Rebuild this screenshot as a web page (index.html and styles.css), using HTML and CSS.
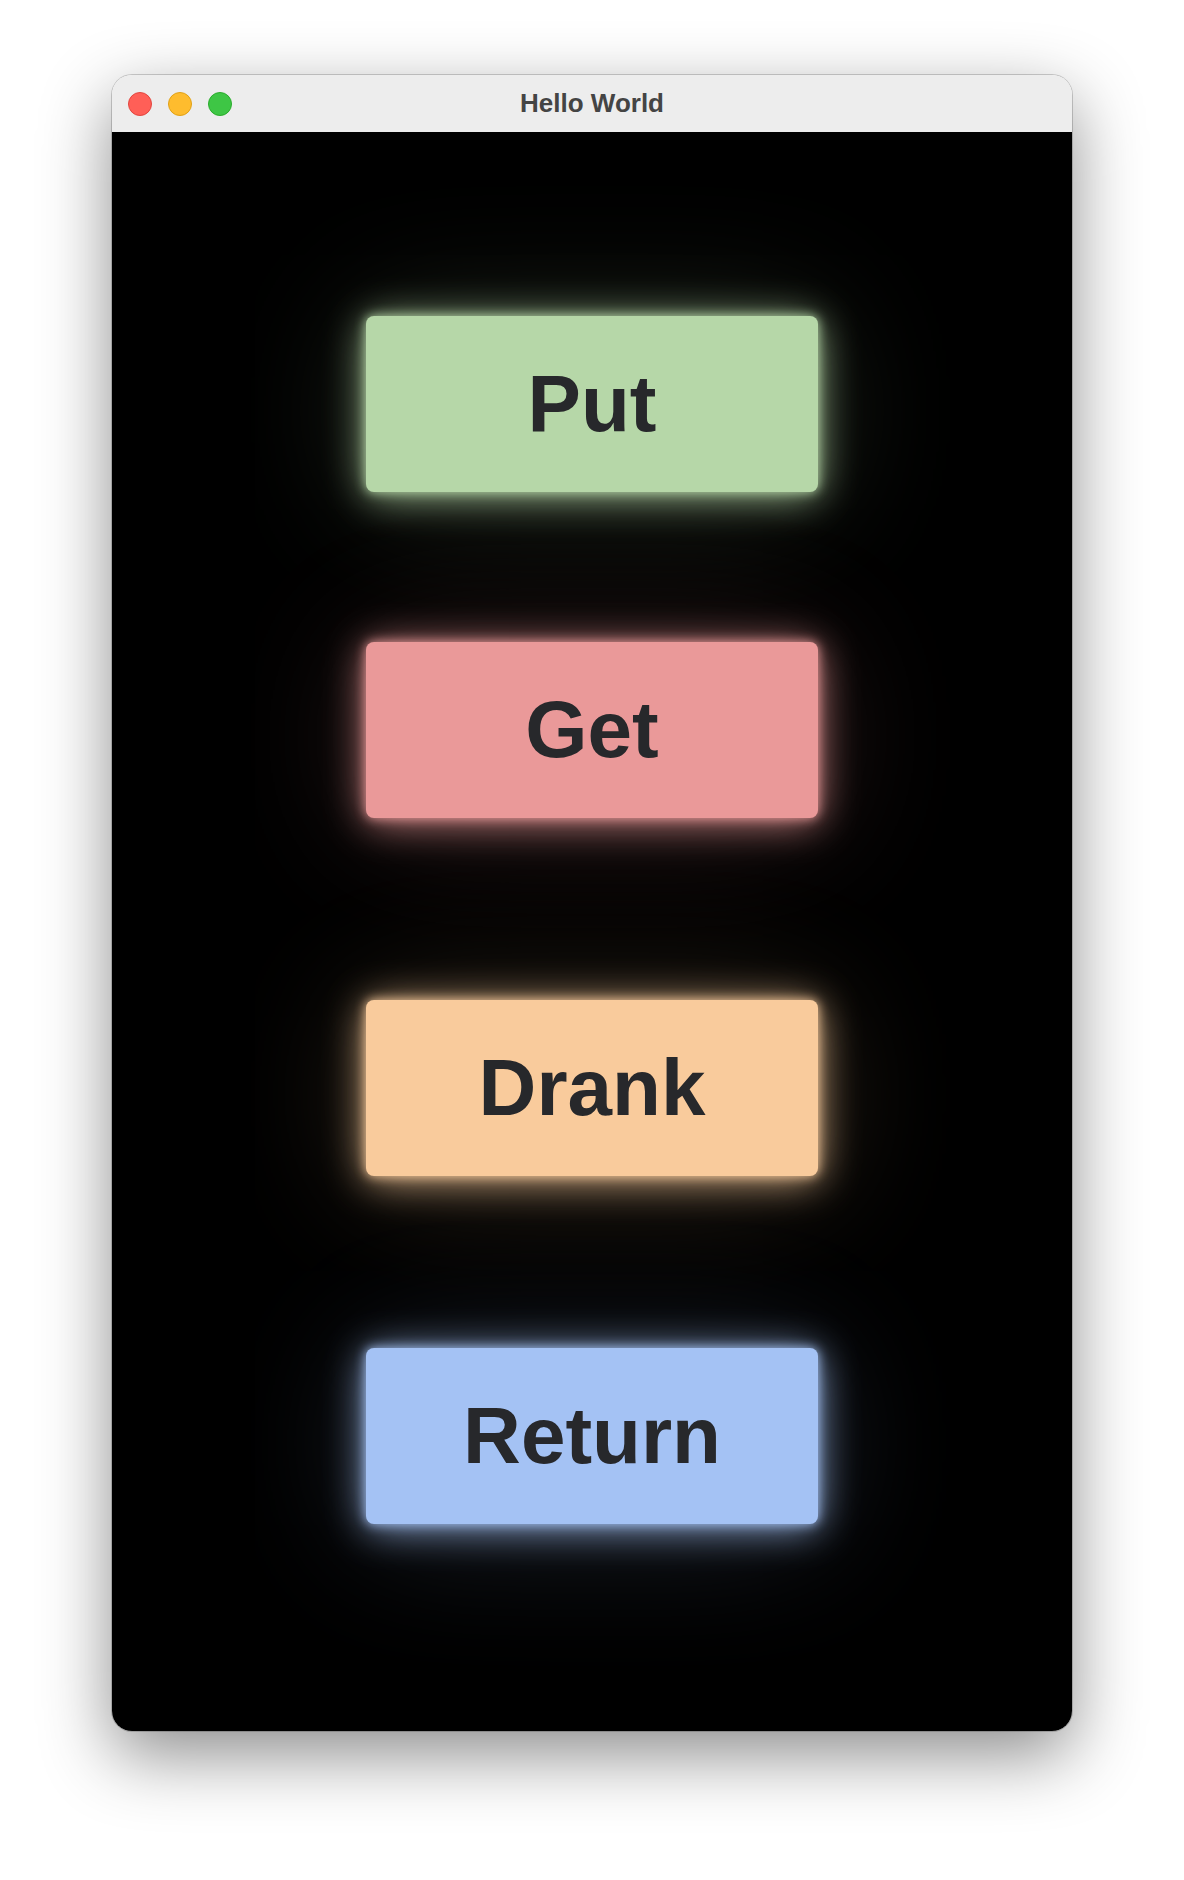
FILE: index.html
```html
<!DOCTYPE html>
<html lang="en">
<head>
    <meta charset="UTF-8">
    <meta name="viewport" content="width=device-width, initial-scale=1.0">
    <title>Hello World</title>
    <link rel="stylesheet" href="styles.css">
</head>
<body>
    <div class="window">
        <div class="titlebar">
            <div class="lights">
                <span class="light red"></span>
                <span class="light yellow"></span>
                <span class="light green"></span>
            </div>
            <h1 class="title">Hello World</h1>
        </div>
        <div class="content">
            <button class="btn btn-put">Put</button>
            <button class="btn btn-get">Get</button>
            <button class="btn btn-drank">Drank</button>
            <button class="btn btn-return">Return</button>
        </div>
    </div>
</body>
</html>
```

FILE: styles.css
```css
body {
    margin: 0;
    padding: 75px 0 149px;
    background: #fff;
    font-family: "Liberation Sans", Arial, sans-serif;
}

.window {
    width: 960px;
    margin: 0 auto;
    border-radius: 20px;
    overflow: hidden;
    box-shadow: 0 0 0 1px rgba(0, 0, 0, 0.18), 0 24px 70px rgba(0, 0, 0, 0.45);
}

.titlebar {
    height: 57px;
    background: #ededed;
    display: flex;
    align-items: center;
    justify-content: center;
    position: relative;
}

.lights {
    position: absolute;
    left: 16px;
    top: 17px;
    display: flex;
    gap: 16px;
}

.light {
    width: 24px;
    height: 24px;
    border-radius: 50%;
    box-sizing: border-box;
}

.red {
    background: #ff5f57;
    border: 1px solid #e2463f;
}

.yellow {
    background: #febc2e;
    border: 1px solid #e1a116;
}

.green {
    background: #3ec645;
    border: 1px solid #2aac2c;
}

.title {
    margin: 0;
    font-size: 26px;
    font-weight: bold;
    color: #444;
}

.content {
    background: #000;
    height: 1599px;
    display: flex;
    flex-direction: column;
    align-items: center;
    padding-top: 184px;
    box-sizing: border-box;
}

.btn {
    width: 452px;
    height: 176px;
    border: none;
    border-radius: 8px;
    font-family: "Liberation Sans", Arial, sans-serif;
    font-size: 80px;
    font-weight: bold;
    color: #27282b;
    cursor: pointer;
}

.btn-put {
    background: #b6d7a8;
    box-shadow: 0 0 12px rgba(182, 215, 168, 1), 0 4px 40px rgba(182, 215, 168, 0.85), 0 6px 140px rgba(182, 215, 168, 0.2);
}

.btn-get {
    margin-top: 150px;
    background: #ea9999;
    box-shadow: 0 0 12px rgba(234, 153, 153, 1), 0 4px 40px rgba(234, 153, 153, 0.85), 0 6px 140px rgba(234, 153, 153, 0.2);
}

.btn-drank {
    margin-top: 182px;
    background: #f9cb9c;
    box-shadow: 0 0 12px rgba(249, 203, 156, 1), 0 4px 40px rgba(249, 203, 156, 0.85), 0 6px 140px rgba(249, 203, 156, 0.2);
}

.btn-return {
    margin-top: 172px;
    background: #a4c2f4;
    box-shadow: 0 0 12px rgba(164, 194, 244, 1), 0 4px 40px rgba(164, 194, 244, 0.85), 0 6px 140px rgba(164, 194, 244, 0.2);
}
```
